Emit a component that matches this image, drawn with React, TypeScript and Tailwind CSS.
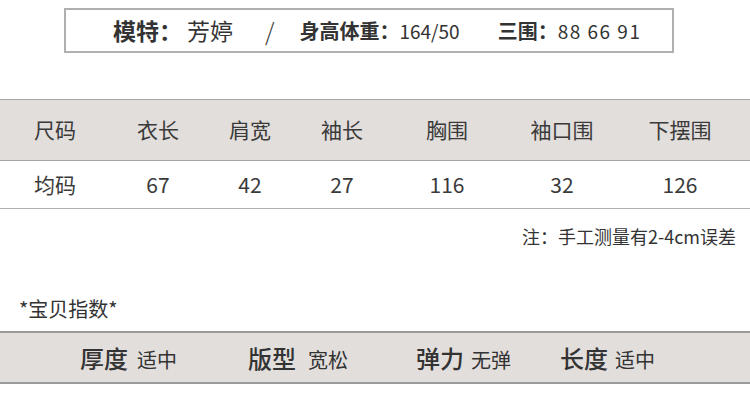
import React from "react";

const font = { fontFamily: '"Noto Sans CJK SC", "Noto Sans", sans-serif' };

const headers = ["尺码", "衣长", "肩宽", "袖长", "胸围", "袖口围", "下摆围"];
const values = ["均码", "67", "42", "27", "116", "32", "126"];

export default function App() {
  return (
    <div className="w-[750px] h-[408px] bg-white overflow-hidden text-[#333]" style={font}>
      <div className="pt-[8px] pl-[64px]">
        <div className="w-[610px] h-[45px] border-2 border-[#b0b0b0] flex items-center pl-[47px] leading-none">
          <span className="text-[23px] font-bold text-[#333]">模特：</span>
          <span className="text-[23px] text-[#333] ml-[5px]">芳婷</span>
          <span className="text-[24px] font-light text-[#333] ml-[32px] mr-[25px]">/</span>
          <span className="text-[20px] font-bold">身高体重：</span>
          <span className="text-[19px]">164/50</span>
          <span className="text-[20px] font-bold ml-[38px]">三围：</span>
          <span className="text-[19px] tracking-[1.5px]">88 66 91</span>
        </div>
      </div>

      <div className="mt-[46px]">
        <div className="grid grid-cols-[110px_96px_88px_96px_114px_116px_120px] h-[62px] items-center bg-[#e2dedc] border-y border-[#a6a6a6]">
          {headers.map((h) => (
            <div key={h} className="text-center text-[21px] text-[#3a3a3a]">{h}</div>
          ))}
        </div>
        <div className="grid grid-cols-[110px_96px_88px_96px_114px_116px_120px] h-[48px] items-center border-b border-[#b0b0b0]">
          {values.map((v, i) => (
            <div key={i} className="text-center text-[21px] text-[#3a3a3a]">{v}</div>
          ))}
        </div>
      </div>

      <div className="flex justify-end pr-[14px] mt-[15px] leading-[24px]">
        <span className="text-[18px] text-[#333]">注：手工测量有2-4cm误差</span>
      </div>

      <div className="pl-[19px] mt-[48px] text-[20px] text-[#333] leading-[26px]">*宝贝指数*</div>

      <div className="mt-[9px] h-[53px] bg-[#e2dedc] border-y-2 border-[#9a9a9a] flex items-center">
        <div className="flex items-baseline ml-[80px]">
          <span className="text-[24px] font-medium text-[#333]">厚度</span>
          <span className="text-[20px] ml-[9px]">适中</span>
        </div>
        <div className="flex items-baseline ml-[71px]">
          <span className="text-[24px] font-medium text-[#333]">版型</span>
          <span className="text-[20px] ml-[12px]">宽松</span>
        </div>
        <div className="flex items-baseline ml-[68px]">
          <span className="text-[24px] font-medium text-[#333]">弹力</span>
          <span className="text-[20px] ml-[7px]">无弹</span>
        </div>
        <div className="flex items-baseline ml-[49px]">
          <span className="text-[24px] font-medium text-[#333]">长度</span>
          <span className="text-[20px] ml-[7px]">适中</span>
        </div>
      </div>
    </div>
  );
}
